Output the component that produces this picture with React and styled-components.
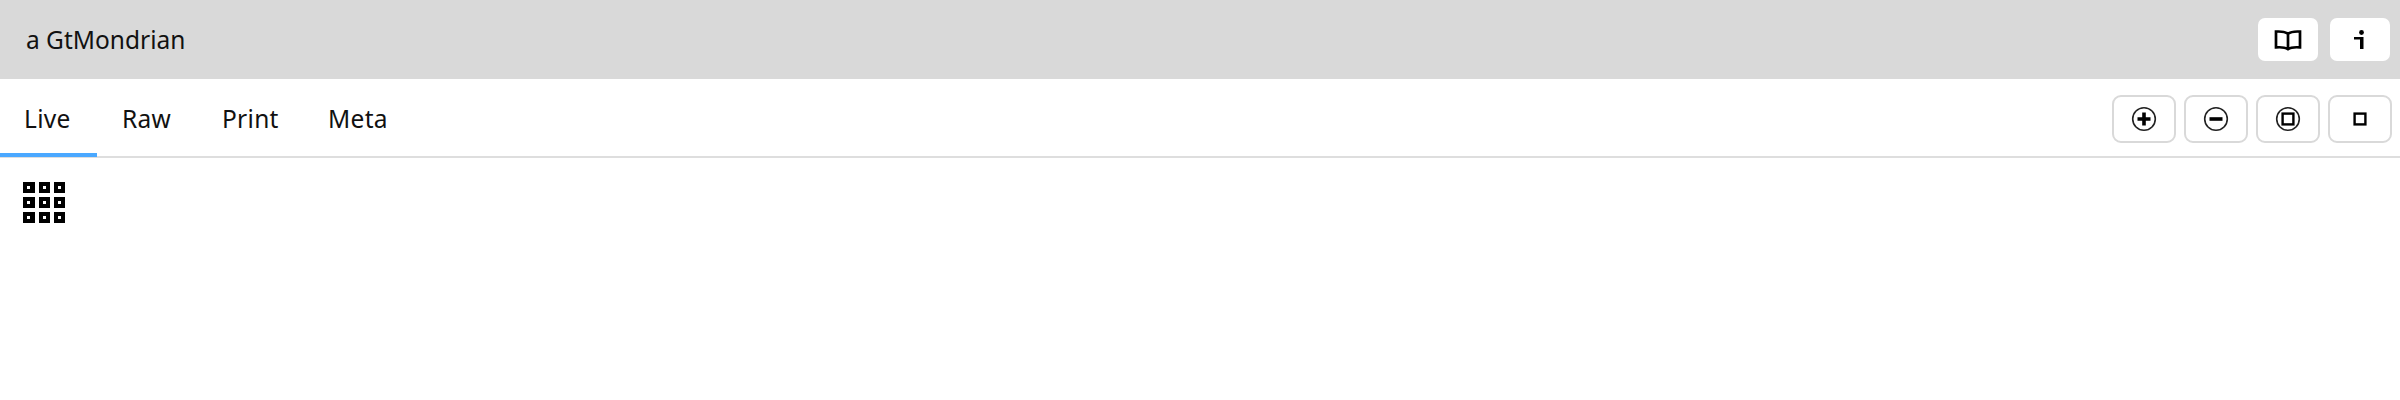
import React from 'react';
import styled, { createGlobalStyle } from 'styled-components';

const GlobalStyle = createGlobalStyle`
    html, body {
        margin: 0;
        padding: 0;
        background: #fff;
        font-family: "Noto Sans", "Open Sans", sans-serif;
        color: #111;
    }
`;

const Header = styled.header`
    height: 79px;
    padding: 0 10px 0 26px;
    background: #d9d9d9;
    display: flex;
    align-items: center;
    justify-content: space-between;
`;

const Title = styled.h1`
    margin: 0;
    font-size: 24.5px;
    font-weight: 400;
`;

const HeaderActions = styled.div`
    display: flex;
    gap: 12px;
`;

const HeaderButton = styled.button`
    width: 60px;
    height: 43px;
    padding: 0;
    border: 0;
    border-radius: 7px;
    background: #fff;
    color: #000;
    display: flex;
    align-items: center;
    justify-content: center;
`;

const TabBar = styled.nav`
    margin-top: 1px;
    height: 78px;
    box-sizing: border-box;
    border-bottom: 2px solid #dedede;
    padding-right: 8px;
    display: flex;
    align-items: stretch;
    justify-content: space-between;
`;

const Tabs = styled.div`
    display: flex;
    align-items: stretch;
`;

const Tab = styled.a`
    width: ${(p) => p.$width}px;
    box-sizing: border-box;
    margin-bottom: -1px;
    padding-left: ${(p) => p.$inset}px;
    border-bottom: 4px solid ${(p) => (p.$active ? '#4aa8ff' : 'transparent')};
    font-size: 24.5px;
    font-weight: 400;
    letter-spacing: 0.3px;
    line-height: 77px;
    white-space: nowrap;
`;

const Tools = styled.div`
    display: flex;
    align-items: flex-start;
    gap: 8px;
    padding-top: 15px;
`;

const ToolButton = styled.button`
    width: 64px;
    height: 48px;
    padding: 0;
    border: 2px solid #d9d9d9;
    border-radius: 9px;
    background: #fff;
    color: #000;
    display: flex;
    align-items: center;
    justify-content: center;
`;

const Content = styled.main`
    padding: 23.5px 0 0 23.3px;
`;

const MondrianGrid = styled.div`
    display: grid;
    grid-template-columns: repeat(3, 11.33px);
    grid-auto-rows: 11.33px;
    gap: 4px;
`;

const Cell = styled.div`
    background: #000;
    display: flex;
    align-items: center;
    justify-content: center;

    &::after {
        content: '';
        width: 3px;
        height: 3px;
        background: #fff;
    }
`;

const BookIcon = () => (
    <svg width="28" height="22" viewBox="0 0 28 22" fill="none" stroke="currentColor" strokeWidth="2.7">
        <path d="M14 5C11.5 2.8 7 2.3 2 2.6V18.4C7 18 11.5 18.4 14 20.2C16.5 18.4 21 18 26 18.4V2.6C21 2.3 16.5 2.8 14 5ZM14 5V20" />
    </svg>
);

const InfoIcon = () => (
    <svg width="14" height="20" viewBox="0 0 14 20" fill="currentColor">
        <circle cx="8.5" cy="2.5" r="2.4" />
        <path d="M1 7H10.5V19H7V9.4H1Z" />
    </svg>
);

const ZoomIcon = ({ kind }) => (
    <svg width="26" height="26" viewBox="0 0 26 26" fill="none" stroke="#000">
        {kind !== 'original' && <circle cx="13" cy="13" r="11.3" stroke="#222" strokeWidth="1.6" />}
        {kind === 'in' && <path d="M6.5 13H19.5M13 6.5V19.5" strokeWidth="3.6" />}
        {kind === 'out' && <path d="M6.5 13H19.5" strokeWidth="3.6" />}
        {(kind === 'fit' || kind === 'original') && <rect x="7.6" y="7.6" width="10.8" height="10.8" strokeWidth="2.4" />}
    </svg>
);

const tabs = [
    { label: 'Live', width: 97, inset: 24, active: true },
    { label: 'Raw', width: 100, inset: 25 },
    { label: 'Print', width: 107, inset: 25 },
    { label: 'Meta', width: 100, inset: 24 },
];

const cells = Array.from({ length: 9 }, (_, i) => i);

export default function App() {
    return (
        <>
            <GlobalStyle />
            <Header>
                <Title>a GtMondrian</Title>
                <HeaderActions>
                    <HeaderButton aria-label="Documentation"><BookIcon /></HeaderButton>
                    <HeaderButton aria-label="Info"><InfoIcon /></HeaderButton>
                </HeaderActions>
            </Header>
            <TabBar>
                <Tabs>
                    {tabs.map((tab) => (
                        <Tab key={tab.label} $width={tab.width} $inset={tab.inset} $active={tab.active}>
                            {tab.label}
                        </Tab>
                    ))}
                </Tabs>
                <Tools>
                    {['in', 'out', 'fit', 'original'].map((kind) => (
                        <ToolButton key={kind} aria-label={kind}><ZoomIcon kind={kind} /></ToolButton>
                    ))}
                </Tools>
            </TabBar>
            <Content>
                <MondrianGrid>
                    {cells.map((i) => <Cell key={i} />)}
                </MondrianGrid>
            </Content>
        </>
    );
}
